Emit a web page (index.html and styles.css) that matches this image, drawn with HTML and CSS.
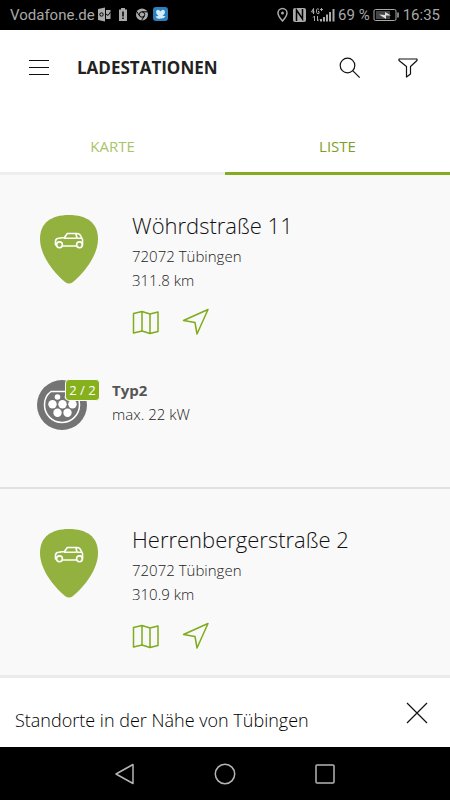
FILE: index.html
```html
<!DOCTYPE html>
<html lang="de">
<head>
<meta charset="utf-8">
<meta name="viewport" content="width=device-width, initial-scale=1">
<title>Ladestationen</title>
<link rel="stylesheet" href="styles.css">
</head>
<body>
<svg class="defs" aria-hidden="true">
  <symbol id="pin" viewBox="0 0 58 69">
    <path fill="#93b13f" d="M29 0C47 0 58 8 58 24C58 40 45 57 33 67Q29 70 25 67C13 57 0 40 0 24C0 8 11 0 29 0Z"/>
    <g fill="none" stroke="#fff" stroke-width="1.600" stroke-linejoin="round">
      <path d="M16.500 30h-1v-3.500q0-3 3-3.200l6-.8 2.800-4h9.500q3 0 4 2.500l1.700 3.500V30h-1M22.500 31h14M24 23.300h12M41.500 23.300h-4.500l-1-4.300"/>
      <circle cx="19.500" cy="29.800" r="2.900"/><circle cx="39.500" cy="29.800" r="2.900"/>
    </g>
  </symbol>
  <symbol id="map" viewBox="0 0 28 28">
    <path fill="none" stroke="#7fab1c" stroke-width="1.500" stroke-linejoin="round" d="M1.500 5.500L10 3.500L18 6L26 4V23.500L18 25.500L10 23L1.500 25ZM10 3.500V23M18 6V25.500"/>
  </symbol>
  <symbol id="arrow" viewBox="0 0 28 28">
    <path fill="none" stroke="#7fab1c" stroke-width="1.500" stroke-linejoin="round" d="M26 1.500L1.500 12.500L13 14.500L15 26Z"/>
  </symbol>
</svg>

<div class="status">
  <span class="carrier">Vodafone.de</span>
  <svg class="notes" width="72" height="18" viewBox="0 0 72 18" aria-hidden="true">
    <path fill="#aaa" d="M1 3l7-1.500v14L1 14zM9 4h4.500v9H9z"/>
    <circle cx="4.500" cy="8.500" r="1.700" fill="none" stroke="#000"/>
    <path d="M9 8l2 1.500L13.500 6" fill="none" stroke="#000"/>
    <path fill="#aaa" d="M24 2h4v1.500h2V15h-8V3.500h2z"/>
    <path stroke="#000" stroke-width="1.500" d="M26 5.500v5M26 11.500v1.500"/>
    <circle cx="45" cy="8.500" r="6" fill="#aaa"/>
    <circle cx="45" cy="8.500" r="2.700" fill="none" stroke="#000"/>
    <path d="M45 5.800h5.500M42.700 10l-3-4.500M47.300 10l-2.800 4.500" stroke="#000"/>
    <rect x="56" y="1" width="15" height="14" rx="3" fill="#2d80bd"/>
    <path fill="#d4ecf8" d="M63.500 5.500Q65.500 2.500 67.500 4.500Q69 7 65.500 10L68.500 10Q67 13 63.500 12.500Q60 13.500 58.500 10.500L61.500 10Q58 7 59.500 4.500Q61.500 2.500 63.500 5.500Z"/>
  </svg>
  <span class="spacer"></span>
  <svg width="62" height="18" viewBox="0 0 62 18" aria-hidden="true">
    <path fill="none" stroke="#aaa" stroke-width="1.500" d="M6.500 15Q2 10 2 7a4.500 4.500 0 0 1 9 0q0 3-4.500 8z"/>
    <circle cx="6.500" cy="7" r="1.500" fill="#aaa"/>
    <rect x="17" y="2" width="13" height="14" rx="2" fill="#aaa"/>
    <path fill="none" stroke="#000" stroke-width="1.500" d="M20.500 15V4l6 9V3"/>
    <path fill="none" stroke="#aaa" d="M37.500 8V2.500L35.500 6h3M43 3.500q-2.500-2-2.500 1.500t2.500 2.500V5.500h-1M44 3.500h3M45.500 2v3M38.500 10v5M37 11.500l1.500-1.500M41.500 10v5M41.500 15l1.500-1.500"/>
    <path fill="#aaa" d="M44 13h2v2.500h-2zM47 11h2v4.500h-2zM50 8.500h2v7h-2zM53 6h2v9.500h-2zM56.500 3h2v12.500h-2z"/>
  </svg>
  <span>69 %</span>
  <svg class="battery" width="26" height="14" viewBox="0 0 26 14" aria-hidden="true">
    <rect x="1" y="1.500" width="22" height="11" rx="1.500" fill="none" stroke="#aaa"/>
    <rect x="3" y="3" width="14" height="8" fill="#444"/>
    <path fill="#ddd" d="M6 6.500l6 .5V4l6 3.500h-5V11z"/>
    <path stroke="#aaa" stroke-width="1.500" d="M25 4.500v5"/>
  </svg>
  <span>16:35</span>
</div>

<header class="header">
  <button class="icon-button" type="button" aria-label="Menü">
    <svg width="22" height="22" viewBox="0 0 22 22"><path stroke="#111" d="M1 3.500h20M1 10.500h20M1 17.500h20"/></svg>
  </button>
  <h1 class="title">LADESTATIONEN</h1>
  <button class="icon-button" type="button" aria-label="Suche">
    <svg width="22" height="22" viewBox="0 0 22 22"><g fill="none" stroke="#111" stroke-width="1.200"><circle cx="8.500" cy="8.500" r="7.300"/><path d="M13.700 13.700l7 7"/></g></svg>
  </button>
  <button class="icon-button" type="button" aria-label="Filter">
    <svg width="22" height="22" viewBox="0 0 22 22"><path fill="none" stroke="#111" stroke-width="1.200" stroke-linejoin="round" d="M2 2h18v1.500L13.500 9.500V17L9.500 20V9.500L2 3.500z"/></svg>
  </button>
</header>

<nav class="tabs">
  <a class="tab" href="#karte">KARTE</a>
  <a class="tab tab-active" href="#liste" aria-current="page">LISTE</a>
</nav>

<main class="list" id="liste">
  <article class="card">
    <div class="station">
      <svg class="pin" aria-hidden="true"><use href="#pin"/></svg>
      <div>
        <h2 class="name">Wöhrdstraße 11</h2>
        <p class="line">72072 Tübingen</p>
        <p class="line">311.8 km</p>
        <div class="actions">
          <button class="action" type="button" aria-label="Auf Karte zeigen"><svg><use href="#map"/></svg></button>
          <button class="action" type="button" aria-label="Route starten"><svg><use href="#arrow"/></svg></button>
        </div>
      </div>
    </div>
    <div class="connector">
      <div class="plug">
        <svg width="50" height="50" viewBox="0 0 50 50" aria-hidden="true">
          <circle cx="25" cy="25" r="25" fill="#747474"/>
          <path fill="none" stroke="#fff" stroke-width="1.500" d="M14 11.500H36Q42.500 16 42.500 25A17.500 17.500 0 0 1 7.500 25Q7.500 16 14 11.500Z"/>
          <g fill="#fff"><circle cx="20.500" cy="17" r="2.800"/><circle cx="30.500" cy="17" r="2.800"/><circle cx="15.500" cy="24.200" r="4.200"/><circle cx="25.500" cy="24.200" r="4.200"/><circle cx="35.500" cy="24.200" r="4.200"/><circle cx="20.500" cy="32.700" r="4.200"/><circle cx="30.500" cy="32.700" r="4.200"/></g>
        </svg>
        <span class="badge">2 / 2</span>
      </div>
      <div>
        <h3 class="type">Typ2</h3>
        <p class="line">max. 22 kW</p>
      </div>
    </div>
  </article>
  <article class="card">
    <div class="station">
      <svg class="pin" aria-hidden="true"><use href="#pin"/></svg>
      <div>
        <h2 class="name">Herrenbergerstraße 2</h2>
        <p class="line">72072 Tübingen</p>
        <p class="line">310.9 km</p>
        <div class="actions">
          <button class="action" type="button" aria-label="Auf Karte zeigen"><svg><use href="#map"/></svg></button>
          <button class="action" type="button" aria-label="Route starten"><svg><use href="#arrow"/></svg></button>
        </div>
      </div>
    </div>
  </article>
</main>

<footer class="notice">
  <p class="notice-text">Standorte in der Nähe von Tübingen</p>
  <button class="icon-button" type="button" aria-label="Schließen">
    <svg width="22" height="22" viewBox="0 0 22 22"><path stroke="#111" stroke-width="1.200" d="M1 1l20 20M21 1L1 21"/></svg>
  </button>
</footer>

<div class="system-nav">
  <button class="icon-button" type="button" aria-label="Zurück">
    <svg width="22" height="22" viewBox="0 0 22 22"><path fill="none" stroke="#b5b5b5" stroke-width="1.500" stroke-linejoin="round" d="M19 1.500v19L2 11z"/></svg>
  </button>
  <button class="icon-button" type="button" aria-label="Startbildschirm">
    <svg width="22" height="22" viewBox="0 0 22 22"><circle cx="11" cy="11" r="9.700" fill="none" stroke="#b5b5b5" stroke-width="1.500"/></svg>
  </button>
  <button class="icon-button" type="button" aria-label="Übersicht">
    <svg width="22" height="22" viewBox="0 0 22 22"><rect x="2" y="2" width="18" height="18" rx="1" fill="none" stroke="#b5b5b5" stroke-width="1.500"/></svg>
  </button>
</div>
</body>
</html>
```
FILE: styles.css
```css
* {
  box-sizing: border-box;
}

body {
  margin: 0;
  height: 100vh;
  display: flex;
  flex-direction: column;
  background: #fff;
  color: #111;
  font-family: "Open Sans", sans-serif;
}

h1, h2, h3, p {
  margin: 0;
}

svg {
  display: block;
}

button {
  padding: 0;
  border: 0;
  background: none;
}

.defs {
  position: absolute;
  width: 0;
  height: 0;
}

.status {
  flex: none;
  display: flex;
  align-items: center;
  height: 30px;
  padding: 0 10px;
  background: #000;
  color: #a8a8a8;
  font: 15px/30px Roboto, sans-serif;
}

.notes {
  margin-left: 2px;
}

.spacer {
  flex: 1;
}

.battery {
  margin: 0 4px 0 3px;
}

.header {
  flex: none;
  display: flex;
  align-items: center;
  gap: 26px;
  height: 76px;
  padding: 0 26px 0 23px;
}

.icon-button {
  display: grid;
  place-items: center;
  width: 32px;
  height: 32px;
}

.title {
  flex: 1;
  margin-left: -4px;
  color: #222;
  font-size: 17px;
  line-height: 24px;
  font-weight: 700;
}

.tabs {
  flex: none;
  display: flex;
}

.tab {
  flex: 1;
  padding: 28px 0 14px;
  border-bottom: 3px solid #eee;
  color: #a9c46b;
  font-size: 15px;
  line-height: 24px;
  text-align: center;
  text-decoration: none;
}

.tab-active {
  border-color: #84ac20;
  color: #7c9f22;
}

.list {
  flex: 1;
  min-height: 0;
  overflow: hidden;
  background: #f9f9f9;
}

.card {
  padding: 34px 37px 57px;
  border-bottom: 2px solid #e2e2e2;
}

.station {
  display: flex;
  gap: 34px;
}

.pin {
  flex: none;
  width: 58px;
  height: 69px;
  margin: 6px 0 0 3px;
}

.name {
  margin-bottom: 3px;
  font-size: 22px;
  line-height: 32px;
  font-weight: 300;
}

.line {
  color: #222;
  font-size: 15px;
  line-height: 24px;
  font-weight: 300;
}

.actions {
  display: flex;
  gap: 22px;
  margin-top: 16px;
}

.action svg {
  width: 28px;
  height: 28px;
}

.connector {
  display: flex;
  gap: 25px;
  margin-top: 42px;
}

.plug {
  position: relative;
  padding-top: 2px;
}

.badge {
  position: absolute;
  top: 1px;
  left: 28px;
  width: 35px;
  border: 1px solid #f9f9f9;
  border-radius: 4px;
  background: #86b01c;
  color: #fff;
  font-size: 13px;
  line-height: 20px;
  text-align: center;
  white-space: nowrap;
}

.type {
  color: #555;
  font-size: 15px;
  line-height: 24px;
}

.notice {
  flex: none;
  display: flex;
  justify-content: space-between;
  padding: 19px 17px 15px 15px;
  border-top: 3px solid #ebebeb;
}

.notice-text {
  padding-top: 11px;
  color: #000;
  font-size: 18px;
  line-height: 24px;
  font-weight: 300;
}

.system-nav {
  flex: none;
  display: flex;
  justify-content: center;
  align-items: center;
  gap: 68px;
  height: 53px;
  background: #000;
}
```
